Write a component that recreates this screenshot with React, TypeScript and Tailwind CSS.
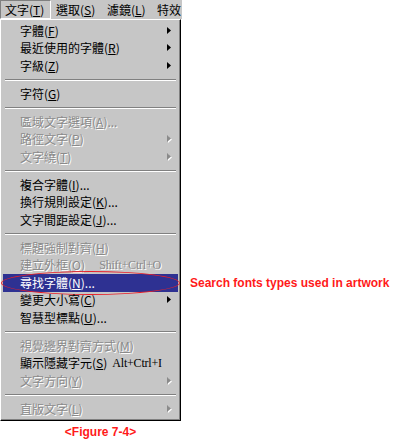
type Item =
  | 'sep'
  | {
      t: string
      k: string
      dots?: boolean
      sub?: boolean
      dis?: boolean
      sc?: string
      active?: boolean
    }

const items: Item[] = [
  { t: '字體', k: 'F', sub: true },
  { t: '最近使用的字體', k: 'R', sub: true },
  { t: '字級', k: 'Z', sub: true },
  'sep',
  { t: '字符', k: 'G' },
  'sep',
  { t: '區域文字選項', k: 'A', dots: true, dis: true },
  { t: '路徑文字', k: 'P', sub: true, dis: true },
  { t: '文字繞', k: 'T', sub: true, dis: true },
  'sep',
  { t: '複合字體', k: 'I', dots: true },
  { t: '換行規則設定', k: 'K', dots: true },
  { t: '文字間距設定', k: 'J', dots: true },
  'sep',
  { t: '標題強制對齊', k: 'H', dis: true },
  { t: '建立外框', k: 'O', dis: true, sc: 'Shift+Ctrl+O' },
  { t: '尋找字體', k: 'N', dots: true, active: true },
  { t: '變更大小寫', k: 'C', sub: true },
  { t: '智慧型標點', k: 'U', dots: true },
  'sep',
  { t: '視覺邊界對齊方式', k: 'M', dis: true },
  { t: '顯示隱藏字元', k: 'S', sc: 'Alt+Ctrl+I' },
  { t: '文字方向', k: 'Y', sub: true, dis: true },
  'sep',
  { t: '直版文字', k: 'L', sub: true, dis: true },
]

function Arrow({ dis }: { dis?: boolean }) {
  return (
    <svg width="5" height="8" viewBox="0 0 5 8" className="block">
      {dis && <path d="M1 1 L5 4.5 L1 8 Z" fill="#ffffff" />}
      <path d="M0 0 L4 3.5 L0 7 Z" fill={dis ? '#8a8a8a' : '#000000'} />
    </svg>
  )
}

function MenuRow({ item }: { item: Exclude<Item, 'sep'> }) {
  const tone = item.active
    ? 'bg-[#2e3192] text-white'
    : item.dis
      ? 'text-[#8a8a8a] [text-shadow:1px_1px_0_#ffffff]'
      : 'text-black'

  return (
    <div className={`relative h-[17.5px] flex items-center pl-[17px] pr-[5px] text-[12px] leading-none ${tone}`}>
      <span className="whitespace-nowrap">
        {item.t}(<span className="underline underline-offset-1">{item.k}</span>){item.dots ? '...' : ''}
      </span>
      {item.sc && (
        <span className="ml-auto mr-[12px] pl-[5px] whitespace-nowrap font-['Liberation_Serif',serif] text-[12px] tracking-[-0.2px]">
          {item.sc}
        </span>
      )}
      {item.sub && (
        <span className="ml-auto mr-[1px]">
          <Arrow dis={item.dis} />
        </span>
      )}
      {item.active && (
        <>
          <div className="absolute left-[-2px] top-[-3px] w-[179px] h-[24px] rounded-[50%] border-[1.5px] border-[#e8202a]" />
          <div className="absolute left-[187px] top-0 h-full flex items-center whitespace-nowrap font-['Liberation_Sans',sans-serif] font-bold text-[12px] text-[#ff1a1a] [text-shadow:none]">
            Search fonts types used in artwork
          </div>
        </>
      )}
    </div>
  )
}

export default function App() {
  return (
    <div className="w-[400px] h-[440px] bg-white font-['Noto_Sans_CJK_TC','Noto_Sans_CJK_SC',sans-serif]">
      <div className="w-[182px] h-[19px] bg-[#c6c6c6] flex text-[12px] leading-none text-black">
        <div className="w-[51px] shrink-0 flex items-center pl-[4px] border-t border-l border-[#808080] border-r-white border-b-white border-r border-b">
          文字(<span className="underline underline-offset-1">T</span>)
        </div>
        <div className="w-[51px] shrink-0 flex items-center pl-[5px]">
          選取(<span className="underline underline-offset-1">S</span>)
        </div>
        <div className="w-[51px] shrink-0 flex items-center pl-[5px]">
          濾鏡(<span className="underline underline-offset-1">L</span>)
        </div>
        <div className="w-[29px] shrink-0 flex items-center pl-[4px] whitespace-nowrap">特效</div>
      </div>

      <div className="w-[181px] bg-[#c6c6c6] border-t border-l border-t-white border-l-white border-r border-b border-r-black border-b-black">
        <div className="px-[2px] py-[2px] shadow-[inset_-1px_-1px_0_#808080]">
          {items.map((item, i) =>
            item === 'sep' ? (
              <div key={i} className="h-[10.5px] flex flex-col justify-center px-[2px]">
                <div className="h-px bg-[#808080]" />
                <div className="h-px bg-white" />
              </div>
            ) : (
              <MenuRow key={i} item={item} />
            ),
          )}
        </div>
      </div>

      <div className="w-[201px] pt-[2px] text-center font-['Liberation_Sans',sans-serif] font-bold text-[12px] text-[#ff1a1a]">
        &lt;Figure 7-4&gt;
      </div>
    </div>
  )
}
